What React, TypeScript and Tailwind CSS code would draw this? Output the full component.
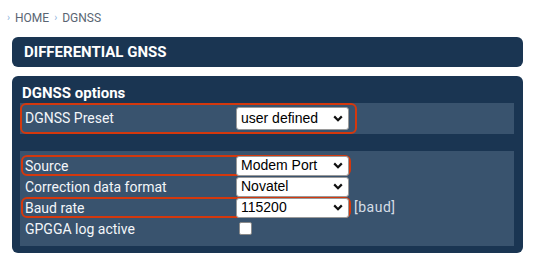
import React from 'react';

const Chevron = () => (
  <svg width="10" height="7" viewBox="0 0 10 7" className="shrink-0">
    <path d="M1.2 1.4 L5 5.2 L8.8 1.4" fill="none" stroke="#111" strokeWidth="2.2" />
  </svg>
);

const FakeSelect = ({ value }: { value: string }) => (
  <div className="w-[113px] h-[20px] bg-white border border-[#9a9a9a] rounded-[3px] flex items-center justify-between pl-[4px] pr-[5px] text-[14px] text-black font-['Liberation_Sans',Arial,sans-serif]">
    <span>{value}</span>
    <Chevron />
  </div>
);

const Row = ({ label, value, outlined, suffix, checkbox }: { label: string; value?: string; outlined?: boolean; suffix?: string; checkbox?: boolean }) => (
  <div className="flex items-center h-[21px] pl-[1px]">
    <div className={`w-[330px] h-[21px] flex items-center rounded-md border-2 ${outlined ? 'border-[#d4380d]' : 'border-transparent'}`}>
      <div className="w-[213px] pl-[2px] text-[14px] text-[#f3f6f9] leading-none">{label}</div>
      {checkbox ? (
        <div className="ml-[3px] w-[13px] h-[13px] bg-white border border-[#8a8a8a] rounded-[2px]" />
      ) : (
        <FakeSelect value={value || ''} />
      )}
    </div>
    {suffix && <span className="ml-[3px] text-[14px] text-[#d5dde6] tracking-[0.5px]">{suffix}</span>}
  </div>
);

const App = () => {
  return (
    <div className="w-[533px] h-[268px] bg-white font-['Roboto','Noto_Sans',sans-serif]">
      {/* Breadcrumb */}
      <div className="flex items-center h-[34px] pl-[7px] pt-[1px] text-[12px] text-[#5a6573] gap-[5px]">
        <span className="text-[#8db4dc] text-[10px]">›</span>
        <span>HOME</span>
        <span className="text-[#8db4dc] text-[10px]">›</span>
        <span>DGNSS</span>
      </div>

      {/* Header */}
      <div className="mt-[3px] mx-[12px] w-[511px] h-[30px] rounded-md bg-[#1a3552] flex items-center pl-[12px]">
        <h1 className="text-[15px] font-bold text-white">DIFFERENTIAL GNSS</h1>
      </div>

      {/* Options panel */}
      <div className="mt-[9px] mx-[12px] w-[511px] h-[177px] rounded-md bg-[#1a3552] pl-[8px] pr-[9px]">
        <div className="h-[27px] flex items-center pl-[2px] pt-[8px]">
          <h2 className="text-[15px] font-bold text-white">DGNSS options</h2>
        </div>

        <div className="h-[31px] bg-[#39536e]">
          <div className="w-[337px] h-[31px] rounded-md border-2 border-[#d4380d] flex items-center">
            <div className="w-[214px] pl-[3px] text-[14px] text-[#f3f6f9]">DGNSS Preset</div>
            <div className="w-[113px] h-[23px] bg-white border border-[#9a9a9a] rounded-[3px] flex items-center justify-between pl-[4px] pr-[5px] text-[14px] text-black font-['Liberation_Sans',Arial,sans-serif]">
              <span>user defined</span>
              <Chevron />
            </div>
          </div>
        </div>

        <div className="mt-[17px] h-[95px] bg-[#39536e] pt-[4px]">
          <Row label="Source" value="Modem Port" outlined />
          <Row label="Correction data format" value="Novatel" />
          <Row label="Baud rate" value="115200" outlined suffix="[baud]" />
          <Row label="GPGGA log active" checkbox />
        </div>
      </div>
    </div>
  );
};

export default App;
